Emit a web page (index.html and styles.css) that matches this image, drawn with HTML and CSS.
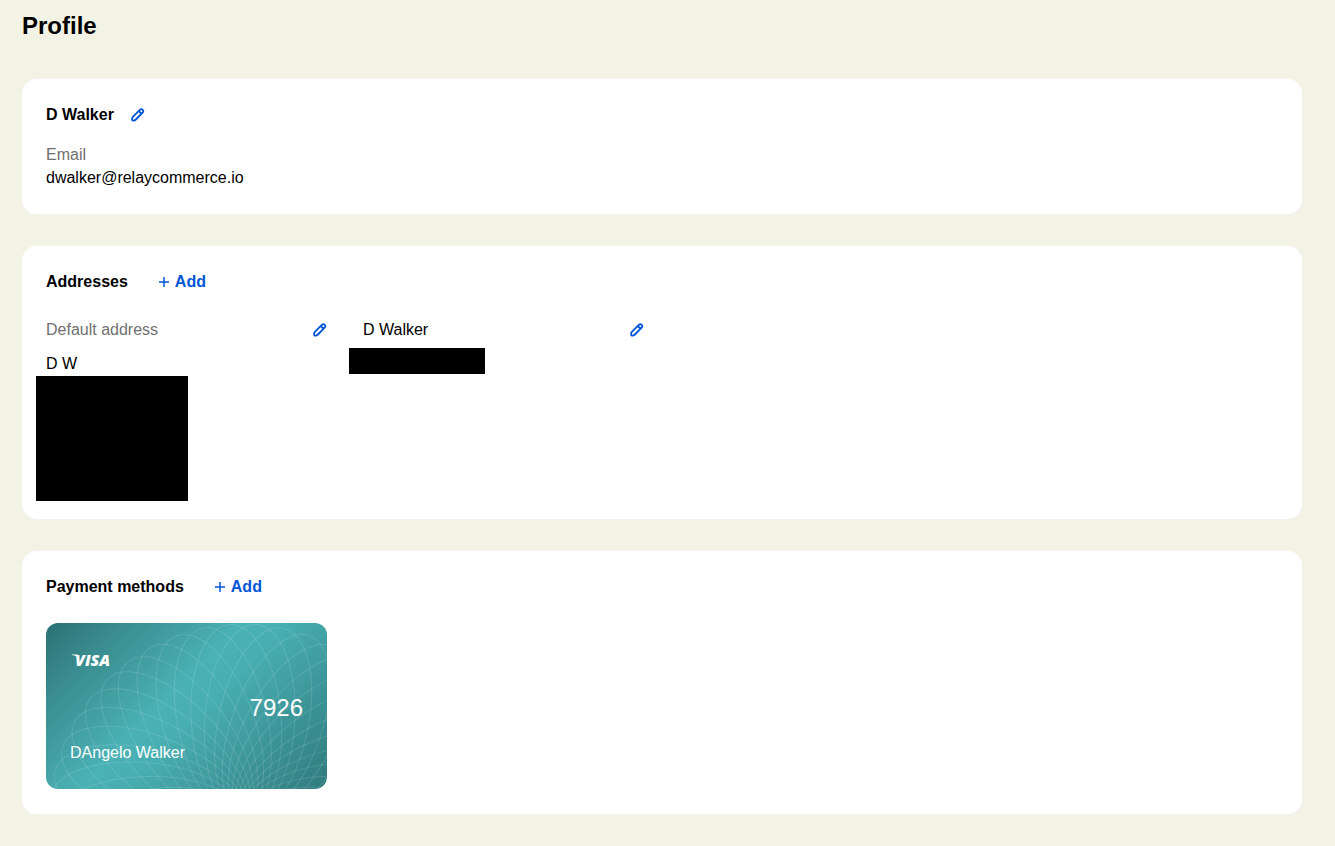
FILE: index.html
```html
<!DOCTYPE html>
<html lang="en">
<head>
    <meta charset="UTF-8">
    <meta name="viewport" content="width=device-width, initial-scale=1.0">
    <title>Profile</title>
    <link rel="stylesheet" href="styles.css">
</head>
<body>
    <svg class="symbols" aria-hidden="true">
        <symbol id="pencil" viewBox="0 0 14 14">
            <path d="M1.4 12.3C.8 10.8 1.1 9.7 2.1 8.7L8.8 1.9C10.9 0 13.4 2.6 11.6 4.7L4.9 11.5C3.9 12.5 2.8 12.9 1.4 12.3ZM8.4 2.6C8.3 4.2 9.4 5.2 11 5.2"/>
        </symbol>
        <symbol id="plus" viewBox="0 0 12 12">
            <path d="M6 1V11M1 6H11"/>
        </symbol>
    </svg>

    <main>
        <h1>Profile</h1>

        <section class="panel">
            <div class="panel-head name-head">
                <h2>D Walker</h2>
                <button class="edit" aria-label="Edit name"><svg><use href="#pencil"/></svg></button>
            </div>
            <dl class="email">
                <dt>Email</dt>
                <dd>dwalker@relaycommerce.io</dd>
            </dl>
        </section>

        <section class="panel">
            <div class="panel-head">
                <h2>Addresses</h2>
                <button class="add"><svg><use href="#plus"/></svg>Add</button>
            </div>
            <div class="addresses">
                <div class="address">
                    <div class="address-top">
                        <span class="muted">Default address</span>
                        <button class="edit" aria-label="Edit default address"><svg><use href="#pencil"/></svg></button>
                    </div>
                    <p>D W</p>
                    <div class="hidden-block"></div>
                </div>
                <div class="address">
                    <div class="address-top">
                        <span>D Walker</span>
                        <button class="edit" aria-label="Edit address"><svg><use href="#pencil"/></svg></button>
                    </div>
                    <div class="hidden-line"></div>
                </div>
            </div>
        </section>

        <section class="panel">
            <div class="panel-head">
                <h2>Payment methods</h2>
                <button class="add"><svg><use href="#plus"/></svg>Add</button>
            </div>
            <div class="pay-card">
                <svg class="petals" viewBox="0 0 281 166" aria-hidden="true"><g id="petals"></g></svg>
                <svg class="visa" viewBox="0 0 48 24" role="img" aria-label="Visa">
                    <path d="M0 6.5H5.4L7.4 12C6 8.9 3.4 7.4 0 6.9Z"/>
                    <text x="3" y="18">VISA</text>
                </svg>
                <p class="digits">7926</p>
                <p class="holder">DAngelo Walker</p>
            </div>
        </section>
    </main>

    <script>
        // ring of ellipses that all meet below the card's bottom edge
        const group = document.getElementById('petals');
        for (let angle = 0; angle < 360; angle += 8) {
            const petal = document.createElementNS('http://www.w3.org/2000/svg', 'ellipse');
            petal.setAttribute('cx', 197);
            petal.setAttribute('cy', 98);
            petal.setAttribute('rx', 45);
            petal.setAttribute('ry', 97);
            petal.setAttribute('transform', `rotate(${angle + 4} 197 195)`);
            group.appendChild(petal);
        }
    </script>
</body>
</html>
```
FILE: styles.css
```css
* {
    box-sizing: border-box;
}
body {
    margin: 0;
    background: #f3f3e5;
    color: #000;
    font-family: "Liberation Sans", Arial, sans-serif;
    font-size: 16px;
    line-height: 24px;
}
h1, h2, p, dl, dd {
    margin: 0;
}
main {
    padding: 10px 33px 32px 22px;
}
h1 {
    font-size: 24px;
    line-height: 32px;
    margin-bottom: 37px;
}
h2 {
    font-size: 16px;
    line-height: 22px;
}
button {
    padding: 0;
    border: 0;
    background: none;
    color: #0055d4;
    font: inherit;
    cursor: pointer;
}
button svg {
    display: block;
    fill: none;
    stroke: currentColor;
}
.symbols {
    display: none;
}
.panel {
    background: #fff;
    border-radius: 15px;
    box-shadow: 0 0 0 1px #f3f3ef;
    padding: 25px 24px;
    margin-bottom: 32px;
}
.panel:last-child {
    margin-bottom: 0;
}
.panel-head {
    display: flex;
    align-items: center;
    gap: 30px;
    height: 22px;
    margin-bottom: 25px;
}
.name-head {
    gap: 17px;
    margin-bottom: 17px;
}
.edit svg {
    width: 14px;
    height: 14px;
    stroke-width: 1.8;
}
.add {
    display: flex;
    align-items: center;
    gap: 5px;
    font-weight: bold;
    line-height: 22px;
}
.add svg {
    width: 12px;
    height: 12px;
    stroke-width: 1.5;
}
.email {
    line-height: 23px;
}
.email dt, .muted {
    color: #707070;
}
.addresses {
    display: flex;
    flex-wrap: wrap;
    gap: 36px;
}
.address {
    width: 281px;
}
.address-top {
    display: flex;
    justify-content: space-between;
    align-items: center;
}
.address p {
    margin-top: 10px;
}
/* hidden details run a little past the text column */
.hidden-block {
    width: 152px;
    height: 125px;
    margin: 0 0 -7px -10px;
    background: #000;
}
.hidden-line {
    width: 136px;
    height: 26px;
    margin: 6px 0 0 -14px;
    background: #000;
}
.pay-card {
    position: relative;
    display: flex;
    flex-direction: column;
    width: 281px;
    height: 166px;
    padding: 25px 24px 24px;
    border-radius: 12px;
    overflow: hidden;
    color: #fff;
    background: linear-gradient(135deg, #2a7073, #38898c 15%, #4ab1b4 44%, #48aeb1 54%, #307b7e);
}
.petals {
    position: absolute;
    inset: 0;
    fill: none;
    stroke: #fff;
    stroke-opacity: 0.13;
}
.visa {
    width: 48px;
    height: 24px;
    margin-left: 2px;
    fill: #fff;
    font: italic 800 16px "Open Sans", sans-serif;
}
.digits {
    margin-top: 20px;
    font-size: 24px;
    line-height: 32px;
    text-align: right;
}
.holder {
    margin-top: auto;
}
```
